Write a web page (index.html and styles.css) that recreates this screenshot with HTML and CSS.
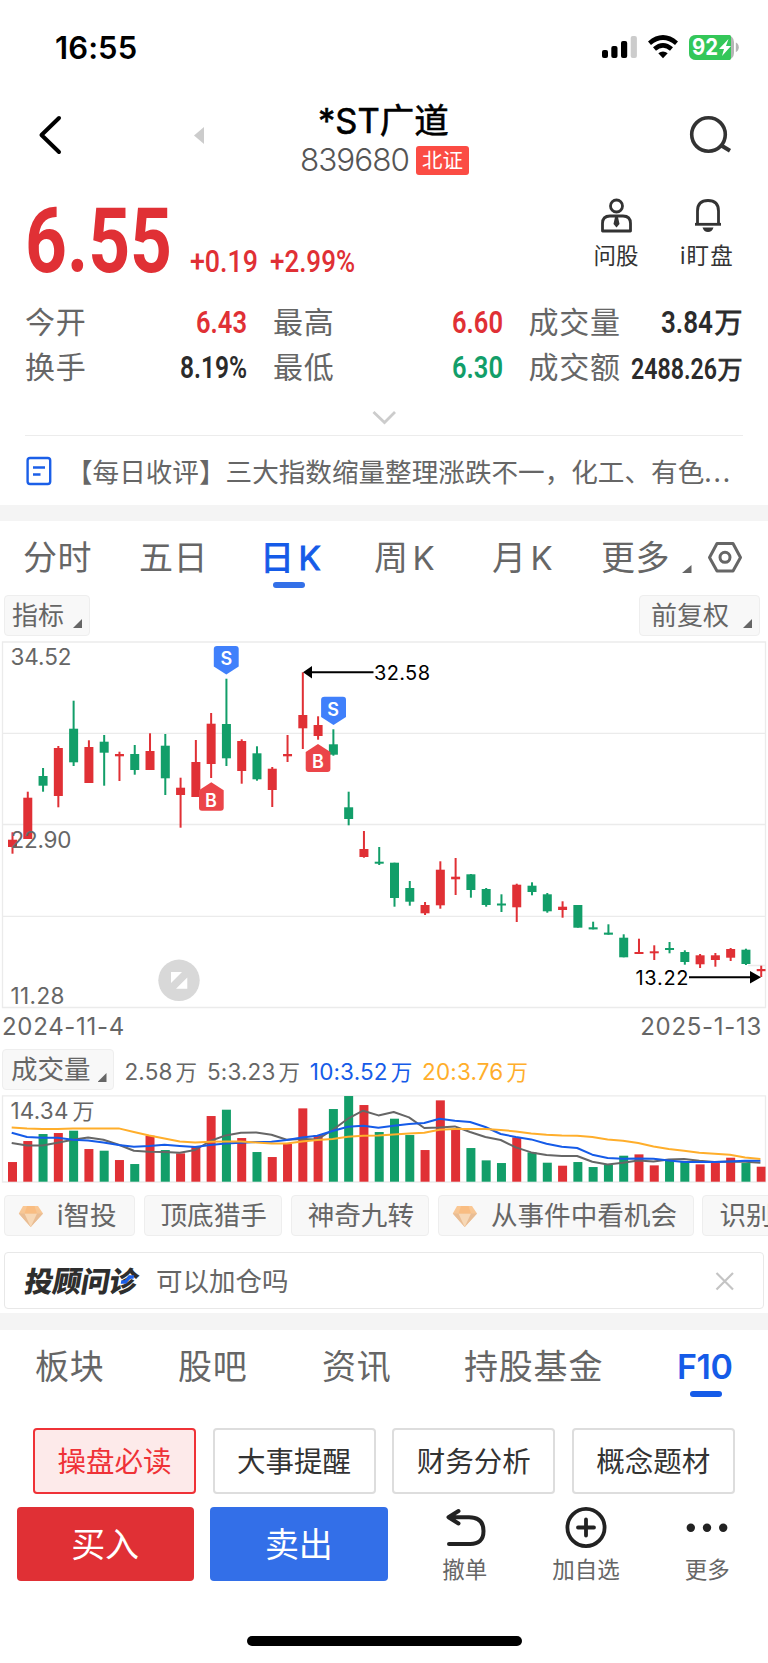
FILE: index.html
```html
<!DOCTYPE html>
<html lang="zh-CN">
<head>
<meta charset="utf-8">
<meta name="viewport" content="width=768">
<title>*ST广道 839680</title>
<link rel="stylesheet" href="styles.css">
</head>
<body>
<main class="app">
  <div class="status">
    <span class="clock">16:55</span>
    <svg width="142" height="30" viewBox="600 32 142 30">
      <g><rect x="602" y="50" width="6" height="8" rx="2"/><rect x="611.3" y="46" width="6.2" height="12" rx="2"/><rect x="621" y="41" width="6.2" height="17" rx="2"/><rect x="630.7" y="36" width="6.2" height="22" rx="2" fill="#ccc"/></g>
      <g fill="none" stroke="#000" stroke-width="4.6"><path d="M649.500 43.200Q663 31.800 676.500 43.200"/><path d="M654.500 49Q663 41.800 671.500 49"/></g>
      <path d="M658.300 53.200Q663 49.600 667.700 53.200L663 58.200Z"/>
      <rect x="689" y="35" width="45" height="25" rx="7" fill="#b5b5b5"/>
      <path d="M696 35H729.500Q731 35 731 37V58Q731 60 729.500 60H696Q689 60 689 53V42Q689 35 696 35Z" fill="#34c759"/>
      <path d="M735.800 42.500Q738.800 44 738.800 47.300T735.800 52.200Z" fill="#b5b5b5"/>
      <text x="692" y="55" class="battery" textLength="26" lengthAdjust="spacingAndGlyphs">92</text>
      <path d="M728.500 39L719 49H724L722 56L731 46H726Z" fill="#fff"/>
    </svg>
  </div>

  <header class="head">
    <svg class="back" width="30" height="44" viewBox="35 113 30 44"><path d="M59 118L41.500 135L59 152" fill="none" stroke="#000" stroke-width="4" stroke-linecap="round" stroke-linejoin="round"/></svg>
    <svg class="prev" width="12" height="20" viewBox="193 125 12 20"><path d="M194 135.500L204 127V144Z" fill="#ccc"/></svg>
    <div class="title">
      <h1>*ST广道</h1>
      <p><span class="code">839680</span><b>北证</b></p>
    </div>
    <svg class="search" width="48" height="44" viewBox="686 112 48 44" fill="none" stroke="#333" stroke-width="3.600"><circle cx="708.500" cy="134.500" r="16.800"/><path d="M720.500 145L730 150.800" stroke-width="4"/></svg>
  </header>

  <section class="price">
    <svg width="340" height="84" viewBox="25 200 340 84" class="din red">
      <text x="25" y="271.500" class="last" textLength="147" lengthAdjust="spacingAndGlyphs">6.55</text>
      <text x="190" y="272" class="chg" textLength="68" lengthAdjust="spacingAndGlyphs">+0.19</text>
      <text x="270" y="272" class="chg" textLength="85" lengthAdjust="spacingAndGlyphs">+2.99%</text>
    </svg>
    <a class="tool">
      <svg width="34" height="36" viewBox="600 198 34 36" fill="none" stroke="#333" stroke-width="2.800"><circle cx="616.500" cy="206" r="6"/><path d="M610 216H623Q630.500 216 630.500 223.500V231H602.500V223.500Q602.500 216 610 216Z" stroke-linejoin="round"/><path d="M615 217H618L619.500 224L616.500 227.500L613.500 224Z" fill="#333" stroke="none"/></svg>
      <span>问股</span>
    </a>
    <a class="tool wide">
      <svg width="34" height="36" viewBox="691 198 34 36" fill="none" stroke="#333" stroke-width="2.800"><path d="M697.500 225V211Q697.500 200.500 708 200.500T718.500 211V225"/><path d="M695 224.300H721"/><path d="M702.500 227.500H713.500Q712 232 708 232T702.500 227.500Z" fill="#333" stroke="none"/></svg>
      <span>i盯盘</span>
    </a>
  </section>

  <section class="stats">
    <span>今开</span><svg class="din red" width="54" height="30"><text x="3" y="26" textLength="51" lengthAdjust="spacingAndGlyphs">6.43</text></svg>
    <span>最高</span><svg class="din red" width="54" height="30"><text x="2" y="26" textLength="51" lengthAdjust="spacingAndGlyphs">6.60</text></svg>
    <span>成交量</span><svg class="din" width="84" height="30"><text x="2" y="26" textLength="52" lengthAdjust="spacingAndGlyphs">3.84</text><text x="55.500" y="26" class="wan">万</text></svg>
    <span>换手</span><svg class="din" width="70" height="30"><text x="3" y="26" textLength="67" lengthAdjust="spacingAndGlyphs">8.19%</text></svg>
    <span>最低</span><svg class="din green" width="54" height="30"><text x="2" y="26" textLength="51" lengthAdjust="spacingAndGlyphs">6.30</text></svg>
    <span>成交额</span><svg class="din small" width="114" height="30"><text x="2" y="26" textLength="86" lengthAdjust="spacingAndGlyphs">2488.26</text><text x="88.500" y="26" class="wan">万</text></svg>
  </section>
  <div class="expand"><svg width="26" height="18" viewBox="371 409 26 18"><path d="M373.500 412L384.500 422.500L395 412" fill="none" stroke="#ccc" stroke-width="2.800"/></svg></div>

  <section class="news">
    <svg width="26" height="30" viewBox="26 456 26 30" fill="none" stroke="#1b5fe8" stroke-width="2.400"><rect x="27.600" y="458" width="22.600" height="26" rx="2.500"/><path d="M33 467.500H45M33 474.500H40.500"/></svg>
    <p>【每日收评】三大指数缩量整理涨跌不一，化工、有色<i>...</i></p>
  </section>
  <div class="band"></div>

  <nav class="ktabs">
    <a>分时</a><a>五日</a><a class="on">日<i>K</i></a><a>周<i>K</i></a><a>月<i>K</i></a><a>更多</a>
    <svg width="64" height="36" viewBox="680 540 64 36"><path d="M691.500 565V573H682Z" fill="#666"/><g fill="none" stroke="#666" stroke-width="3"><path d="M717 543.500H733L740.500 557.500L733 571H717L709.500 557.500Z" stroke-linejoin="round"/><circle cx="725" cy="557.300" r="5"/></g></svg>
  </nav>

  <div class="bar">
    <a class="chip drop">指标<i></i></a>
    <a class="chip drop right">前复权<i></i></a>
  </div>

  <svg class="chart" width="768" height="370" viewBox="0 640 768 370">
    <g fill="none" stroke="#ebebeb" stroke-width="1.300"><path d="M2.500 642H765.500V1007.500H2.500ZM2.500 733.300H765.500M2.500 824.500H765.500M2.500 916.300H765.500M748 965.500H765.500"/></g>
    <g id="candle-layer"></g>
    <g class="axis">
      <text x="10.500" y="665" textLength="61" lengthAdjust="spacing">34.52</text>
      <text x="10.500" y="848" textLength="61" lengthAdjust="spacing">22.90</text>
      <text x="10.500" y="1004" textLength="54" lengthAdjust="spacing">11.28</text>
    </g>
    <g fill="#4080fb"><path d="M217 646H235.700Q238.700 646 238.700 649V666.500L226.300 674.500L213.800 666.500V649Q213.800 646 217 646Z"/><path d="M324.500 696.700H343Q346 696.700 346 699.700V717L333.500 725L321.100 717V699.700Q321.100 696.700 324.500 696.700Z"/></g>
    <g fill="#eb4549"><path d="M211.300 782.300L223.700 790.300V807.700Q223.700 810.700 220.700 810.700H202Q199 810.700 199 807.700V790.300Z"/><path d="M318 744L330.400 752V769Q330.400 772 327.400 772H308.700Q305.700 772 305.700 769V752Z"/></g>
    <g class="mark"><text x="226.300" y="664.500">S</text><text x="333" y="715.500">S</text><text x="211" y="806.500">B</text><text x="318" y="767.500">B</text></g>
    <path d="M303 672.200L312 666V678.500ZM761 977.300L750 971V983.500Z"/>
    <path d="M310 672.200H373.500M689 977.300H752" stroke="#000" stroke-width="2"/>
    <g class="peak"><text x="374" y="680" textLength="56" lengthAdjust="spacing">32.58</text><text x="635.500" y="985" textLength="53" lengthAdjust="spacing">13.22</text></g>
    <circle cx="179" cy="980.300" r="20.700" fill="#d8d8d8"/>
    <path d="M171 972H182L171 983ZM187.300 977.500V988.700H176Z" fill="#fff"/>
  </svg>
  <div class="dates"><span>2024-11-4</span><span>2025-1-13</span></div>

  <div class="legend">
    <a class="chip drop">成交量<i></i></a>
    <span>2.58<em>万</em></span><span>5:3.23<em>万</em></span><span class="blue">10:3.52<em>万</em></span><span class="gold">20:3.76<em>万</em></span>
  </div>
  <svg class="chart" width="768" height="94" viewBox="0 1092 768 94">
    <path d="M2.500 1095.800H765.500V1182H2.500Z" fill="none" stroke="#ebebeb" stroke-width="1.300"/>
    <g id="volume-layer"></g>
    <g id="average-layer" fill="none" stroke-width="2" stroke-linejoin="round"></g>
    <g class="axis"><text x="10.500" y="1119" textLength="58" lengthAdjust="spacing">14.34</text><text x="72.500" y="1119" class="cjk">万</text></g>
  </svg>

  <div class="strategies">
    <a class="chip w1"><svg class="gem" width="26" height="23"><use href="#gem"/></svg>i智投</a>
    <a class="chip w2">顶底猎手</a>
    <a class="chip w2">神奇九转</a>
    <a class="chip w3"><svg class="gem" width="26" height="23"><use href="#gem"/></svg>从事件中看机会</a>
    <a class="chip w2">识别</a>
  </div>

  <div class="ask">
    <span class="brand">投顾问诊<svg width="16" height="12"><path d="M2 8H6.500L9.500 3H14" fill="none" stroke="#1b5fe8" stroke-width="3.600"/></svg></span>
    <span class="q">可以加仓吗</span>
    <svg class="close" width="20" height="20" viewBox="716 1271 20 20"><path d="M717.500 1273L734 1289.500M734 1273L717.500 1289.500" stroke="#c4c4c4" stroke-width="2.200"/></svg>
  </div>
  <div class="band low"></div>

  <nav class="tabs"><a>板块</a><a>股吧</a><a>资讯</a><a>持股基金</a><a class="on">F10</a></nav>
  <div class="pills"><a class="on">操盘必读</a><a>大事提醒</a><a>财务分析</a><a>概念题材</a></div>

  <footer class="actions">
    <a class="btn buy">买入</a>
    <a class="btn sell">卖出</a>
    <a class="act"><svg width="44" height="42" viewBox="443 1507 44 42" fill="none" stroke="#222" stroke-width="4" stroke-linecap="round" stroke-linejoin="round"><path d="M449 1517.300H469Q483.500 1517.300 483.500 1531T469 1544H449M458.500 1511L448.500 1517.300L458.500 1523.500"/></svg><span>撤单</span></a>
    <a class="act"><svg width="44" height="42" viewBox="563.500 1507 44 42" fill="none" stroke="#222" stroke-width="3.800"><circle cx="585.500" cy="1527.500" r="18.600"/><path d="M577.500 1527.500H593.500M585.500 1519.500V1535.500" stroke-linecap="round"/></svg><span>加自选</span></a>
    <a class="act"><svg width="44" height="42" viewBox="685 1507 44 42" fill="#222"><circle cx="690.800" cy="1527.700" r="4.200"/><circle cx="707" cy="1527.700" r="4.200"/><circle cx="723.200" cy="1527.700" r="4.200"/></svg><span>更多</span></a>
  </footer>
  <div class="home"></div>
</main>
<svg width="0" height="0" class="defs">
  <defs>
    <linearGradient id="gold" x1="0" y1="0" x2="0" y2="1"><stop offset="0" stop-color="#fbc894"/><stop offset="1" stop-color="#ecc298"/></linearGradient>
    <g id="gem"><path d="M5 1H20L25 8.500L12.700 22L.8 8.500Z" fill="url(#gold)"/><path d="M.8 8.500H25L12.700 22Z" fill="#e9bd94"/><path d="M6.500 8.500H19L12.700 22Z" fill="#f7d8b6"/><path d="M9 1L6.500 8.500H19L16.500 1Z" fill="#f9bd82"/></g>
  </defs>
</svg>
<script src="chart.js"></script>
</body>
</html>
```

FILE: styles.css
```css
* { box-sizing: border-box; }
body { margin: 0; background: #fff; color: #666; font-family: Inter, "Noto Sans CJK SC", sans-serif; }
.app { width: 768px; height: 1663px; overflow: hidden; display: flex; flex-direction: column; }
.app > * { flex-shrink: 0; }
svg { display: block; overflow: visible; }
.defs { position: absolute; }
i, em { font-style: normal; }

.status { height: 90px; padding: 27px 26px 0 55px; display: flex; justify-content: space-between; align-items: flex-start; color: #000; }
.status svg { margin-top: 5px; }
.clock { font-size: 31px; line-height: 41px; font-weight: 600; letter-spacing: .1px; }
.battery { font: 700 22.500px Inter, sans-serif; fill: #fff; }

.head { height: 110px; display: grid; grid-template-columns: 35px 158px 107px 386px 48px; }
.back { grid-column: 2; margin-top: 23px; }
.prev { grid-column: 3; margin-top: 35px; }
.search { grid-column: 5; margin-top: 22px; }
.title { grid-column: 4; }
.title h1 { margin: 9px 0 0 18px; color: #000; font-size: 34.500px; line-height: 44px; font-weight: 400; letter-spacing: 0; -webkit-text-stroke: .6px #000; }
.title p { margin: 2px 0 0; display: flex; align-items: center; gap: 7px; height: 30px; }
.code { font-size: 31.500px; font-weight: 300; letter-spacing: -1px; width: 109px; line-height: 30px; color: #555; }
.title b { width: 53px; height: 29px; background: #fb4c44; border-radius: 3px; color: #fff; font-size: 20.500px; line-height: 29px; font-weight: 400; text-align: center; }

.din { font-family: Roboto, sans-serif; font-weight: 600; fill: #2b2b2b; }
.din.red { fill: #e03035; }
.din.green { fill: #129e69; }
.last { font-size: 90px; font-weight: 700; }
.chg { font-size: 31px; font-weight: 500; }
.price { height: 93px; padding-left: 25px; display: flex; align-items: flex-start; }
.tool { display: flex; flex-direction: column; align-items: center; width: 90px; margin: -2px 0 0 206px; color: #333; font-size: 22.500px; line-height: 32px; }
.tool svg { margin-left: 1px; }
.tool span { margin-top: 6px; }
.tool.wide { margin-left: 1px; letter-spacing: 1.200px; }

.stats { padding: 14px 0 0 25px; display: grid; grid-template-columns: 91px 131px 118px 139px 117px 122px; grid-template-rows: 45px 45px; height: 114px; align-items: start; }
.stats span { font-size: 30px; line-height: 30px; letter-spacing: .7px; }
.stats span:nth-of-type(2), .stats span:nth-of-type(5) { padding-left: 26px; }
.stats span:nth-of-type(3), .stats span:nth-of-type(6) { padding-left: 24.500px; white-space: nowrap; }
.stats svg { justify-self: end; }
.stats text { font-size: 31px; }
.stats .small { margin-top: 1px; }
.stats .small text { font-size: 29px; }
.stats .wan { font: 400 28px "Noto Sans CJK SC", sans-serif; stroke: #2b2b2b; stroke-width: .8; }
.stats .small .wan { font-size: 25px; }
.expand { height: 29px; margin: 0 25px; border-bottom: 1.500px solid #ececec; display: flex; justify-content: center; padding-top: 2px; }

.news { height: 69px; display: flex; padding: 20px 0 0 26px; }
.news p { margin: 0 0 0 14px; font-size: 26.600px; line-height: 29px; white-space: nowrap; font-family: "Noto Sans CJK SC", sans-serif; }
.news i { letter-spacing: 1.900px; }
.band { height: 16px; background: #f4f4f4; }

.ktabs { height: 74px; padding: 19px 0 0 23px; display: grid; grid-template-columns: 116px 123px 112px 118px 109px 79px 64px; font-size: 34px; line-height: 36px; letter-spacing: .6px; }
.ktabs a { white-space: nowrap; }
.ktabs i { margin-left: 4px; font-size: 33px; }
.ktabs .on { color: #155be8; position: relative; left: -2px; -webkit-text-stroke: 1px #155be8; }
.ktabs .on::after { content: ""; position: absolute; left: 13px; top: 42px; width: 32px; height: 6px; border-radius: 3px; background: #3370e8; }

.chip { background: #f8f8f8; border: 1px solid #eee; border-radius: 4px; height: 41px; font-size: 26.600px; line-height: 39px; white-space: nowrap; flex-shrink: 0; }
.drop { display: flex; }
.drop i { width: 9px; height: 9px; background: #666; clip-path: polygon(100% 0, 100% 100%, 0 100%); margin: 23px 0 0 9px; }
.bar { height: 45px; display: flex; justify-content: space-between; padding: 0 8px 0 4px; }
.bar .chip { width: 86px; padding-left: 7px; font-size: 26px; }
.bar .right { width: 121px; padding-left: 11px; }
.bar .right i { margin-left: 14px; }

.axis { fill: #666; font-size: 22.500px; }
.cjk { font-family: "Noto Sans CJK SC", sans-serif; font-size: 22px; }
.mark { fill: #fff; font-size: 18px; font-weight: 600; text-anchor: middle; }
.peak { fill: #000; font-size: 20px; }
.dates { height: 39px; padding: 0 6px 0 2px; display: flex; justify-content: space-between; font-size: 24px; line-height: 33px; letter-spacing: .7px; }

.legend { height: 43px; padding-left: 2px; display: flex; font-size: 22.500px; line-height: 46px; letter-spacing: .15px; }
.legend .chip { width: 112px; padding-left: 8px; margin-right: 10.500px; font-size: 26.500px; letter-spacing: 0; }
.legend .drop i { margin-left: 7px; }
.legend em { margin-left: 3px; font-size: 21.500px; }
.legend span { margin-right: 9.700px; white-space: nowrap; }
.blue { color: #155be8; }
.gold { color: #ffae2b; }

.strategies { height: 58px; padding: 9px 0 0 4px; display: flex; gap: 8.500px; overflow: hidden; }
.strategies .chip { padding-left: 16px; display: flex; }
.gem { margin: 9px 13px 0 -3px; }
.w1 { width: 131px; }
.w2 { width: 138.700px; }
.w3 { width: 256px; }

.ask { height: 57px; margin: 8px 4px 4px; border: 1.500px solid #e8e8e8; border-radius: 4px; display: flex; align-items: center; }
.brand { margin-left: 20px; width: 115px; font-size: 28.500px; font-weight: 900; color: #2e2e2e; transform: skewX(-10deg); line-height: 30px; letter-spacing: -.3px; position: relative; top: 1px; }
.brand svg { position: absolute; right: 5px; top: 7px; }
.q { margin: 0 0 0 16px; font-size: 26.500px; line-height: 30px; }
.close { margin-left: auto; margin-right: 28px; }
.low { height: 17px; }

.tabs { height: 98px; padding: 19px 0 0 35px; display: grid; grid-template-columns: 143px 144px 142px 213px 61px; font-size: 34px; line-height: 36px; letter-spacing: .8px; }
.tabs .on { color: #155be8; font-weight: 600; font-size: 34px; position: relative; letter-spacing: -.4px; }
.tabs .on::after { content: ""; position: absolute; left: 13px; top: 42px; width: 32px; height: 6px; border-radius: 3px; background: #155be8; }

.pills { display: grid; grid-template-columns: repeat(4, 163px); gap: 16.600px; padding-left: 33px; height: 79px; }
.pills a { height: 66px; border: 2px solid #ddd; border-radius: 4px; text-align: center; color: #333; font-size: 28.500px; line-height: 64px; }
.pills .on { border-color: #ef3237; background: #fdeaea; color: #ef3237; }

.actions { display: flex; height: 129px; padding-left: 16.500px; }
.btn { width: 177.500px; height: 74px; border-radius: 4px; color: #fff; font-size: 34px; line-height: 76px; text-align: center; margin-right: 16.500px; }
.buy { background: #e03035; }
.sell { background: #336fe8; }
.act { width: 121.500px; display: flex; flex-direction: column; align-items: center; font-size: 22.500px; line-height: 32px; }
.act span { margin-top: 5px; }
.home { width: 275px; height: 10px; border-radius: 5px; background: #000; margin-left: 247px; }
```

FILE: chart.js
```js
const NS = "http://www.w3.org/2000/svg";
const UP = "#e03035", DOWN = "#129e69";
const STEP = 15.28, FIRST = 12.5;

// direction, high, body top, body bottom, low
const candles = [
  ["R",832.3,839.7,847,853.7],["R",791.7,797.7,839,839],["G",768,776,785.7,791.7],["R",746,748,796,807.3],["G",700.7,728.7,762.3,766],
  ["R",740.3,747,783,783],["G",735,741.7,752.7,785.7],["R",751.7,754,756.3,781],["G",745,754,770,774.7],["R",733.3,751,770,770],
  ["G",734,745.7,778.3,795],["R",777.7,787.7,795,827.7],["R",740,762,797,797],["R",713,723.7,764,778],["G",678.7,724,758.3,766],
  ["R",739.3,741,771,783.7],["G",746.3,753.3,779.3,780.7],["R",767,768.7,790,807],["R",735,754,756.3,762],["R",672.3,715,728.3,749],
  ["R",716.3,725,736,739.7],["G",729.3,744.3,754.7,755.7],["G",791.7,807.3,819,825.3],["R",831,849,857,857.7],["G",847,861.7,863.7,865],
  ["G",862.7,862.7,898,906.7],["G",881,888,901.7,905.7],["R",902,905,913.3,915],["R",861.3,869.7,905.3,908.7],["R",858,876.7,879.3,895],
  ["G",874,874.3,890,897.7],["G",888,889,905,906.7],["G",894.3,903.5,905.5,912],["R",883.7,884.7,907.3,922],["G",882.3,885.7,892,895.3],
  ["G",893,894.3,911.3,912.7],["R",901.3,906.7,910,917.7],["G",905,905,927.7,927.7],["G",921.7,927.3,929.4,929.4],["G",924.3,932.6,934.7,934.7],
  ["G",934.3,937.7,957.3,957.3],["R",938.7,952,954,954],["R",945.3,951.3,953.3,960],["G",942,948,950,953.3],["G",950.3,952,962,964.7],
  ["R",954,955.3,964.3,968],["R",953,955.3,960,966.7],["R",948,949,957.7,961],["G",948.7,949.7,964,965],["R",965.7,969,971.2,977]
];

// volume and averages are distances above the baseline, in thirds of a pixel
const volume = [59,122,143,146,153,98,93,65,53,138,95,85,104,197,216,131,89,74,113,220,140,218,257,230,149,189,140,95,244,157,101,64,56,133,88,57,48,59,44,51,78,82,49,65,60,52,56,72,56,45];
const averages = {
  "#666": [116,109,109,117,126,133,126,111,93,90,89,87,95,122,139,147,148,141,126,128,127,155,189,213,199,209,193,161,163,166,149,134,125,103,88,80,77,77,60,52,57,64,61,67,68,63,59,61,60,57],
  "#155be8": [147,134,132,132,126,124,118,110,105,107,111,107,104,110,115,117,119,120,125,133,138,152,165,168,162,168,173,176,189,183,179,164,143,134,127,114,105,101,81,71,69,70,69,64,59,59,59,61,63,63],
  "#ffae2b": [163,160,158,158,160,160,160,160,149,139,130,121,118,120,121,121,118,115,115,121,125,128,135,138,139,142,145,147,156,158,158,158,155,151,145,141,139,138,134,127,123,116,106,98,93,87,84,81,73,68]
};
const BASE = 1181.7;

function add(parent, tag, attrs) {
  const el = document.createElementNS(NS, tag);
  for (const k in attrs) el.setAttribute(k, attrs[k]);
  parent.appendChild(el);
}

const candleLayer = document.getElementById("candle-layer");
const volumeLayer = document.getElementById("volume-layer");
candles.forEach(([dir, high, top, bottom, low], i) => {
  const x = FIRST + STEP * i;
  const fill = dir === "R" ? UP : DOWN;
  const width = Math.min(9, 765.5 - x + 4.5);
  add(candleLayer, "rect", { x: x - 1, y: high, width: 2, height: low - high, fill });
  add(candleLayer, "rect", { x: x - 4.5, y: top, width, height: bottom - top, fill });
  add(volumeLayer, "rect", { x: x - 4.5, y: BASE - volume[i] / 3, width, height: volume[i] / 3, fill });
});

const averageLayer = document.getElementById("average-layer");
for (const stroke in averages) {
  const points = averages[stroke].map((v, i) => `${(FIRST + STEP * i - 0.8).toFixed(1)},${(BASE - v / 3).toFixed(1)}`).join(" ");
  add(averageLayer, "polyline", { points, stroke });
}
```
